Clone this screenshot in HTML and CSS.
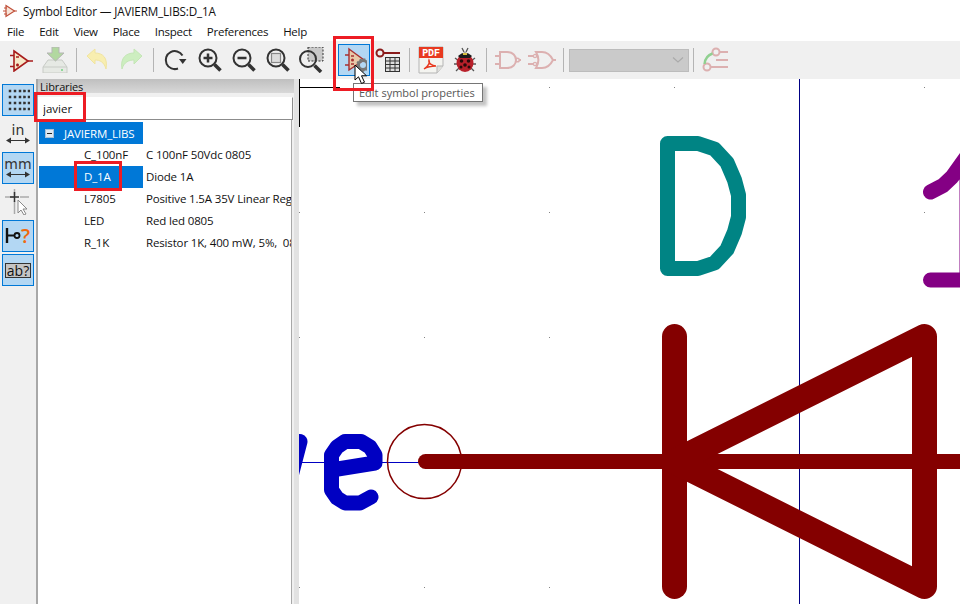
FILE: index.html
```html
<!DOCTYPE html>
<html lang="en">
<head>
    <meta charset="UTF-8">
    <title>Symbol Editor — JAVIERM_LIBS:D_1A</title>
    <link rel="stylesheet" href="styles.css">
</head>
<body>
    <div class="titlebar">
        <svg class="title-icon" width="14" height="14" viewBox="0 0 14 14"><path d="M3 1.5 L11.5 7 L3 12.5 Z" fill="#f8e4d8" stroke="#c0503a" stroke-width="1.2"/><path d="M0 7 H3 M11 7 H14 M4 4 H1 M4 10 H1" stroke="#c0503a" stroke-width="1"/></svg>
        <span>Symbol Editor — JAVIERM_LIBS:D_1A</span>
    </div>
    <div class="menubar">
        <span>File</span><span>Edit</span><span>View</span><span>Place</span><span>Inspect</span><span>Preferences</span><span>Help</span>
    </div>
    <div class="toolbar">
        <div class="btn"><svg width="24" height="24" viewBox="0 0 24 24"><path d="M5 3 L19 13 L5 23 Z" fill="#f6e8c8" stroke="#a81c1c" stroke-width="1.6"/><path d="M1 7.5 H5 M1 18.5 H5 M19 13 H24 M7 9 H10 M7 17 H10 M8.5 15.5 V18.5" stroke="#a81c1c" stroke-width="1.6"/></svg></div>
        <div class="btn"><svg width="26" height="26" viewBox="0 0 26 26"><path d="M1 26 V20 L6 13 H20 L25 20 V26 Z" fill="#e6e9e4" stroke="#c8cbc6"/><path d="M1 20 H25" stroke="#c8cbc6"/><rect x="19" y="22" width="2" height="2" fill="#8fd89a"/><path d="M10 0 H17 V6 H22 L13.500 14 L5 6 H10 Z" fill="#b2d8a0" stroke="#b5b5b5"/></svg></div>
        <div class="sep"></div>
        <div class="btn"><svg width="22" height="24" viewBox="0 0 22 24"><path d="M1 8 L9 1 V5 C17 5 22 10 20 21 C18 14 14 12 9 12 V16 Z" fill="#f8eeb0" stroke="#f0e4a0"/></svg></div>
        <div class="btn"><svg width="24" height="24" viewBox="0 0 24 24"><path d="M23 8 L15 1 V5 C7 5 1 10 3 21 C5 14 10 12 15 12 V16 Z" fill="#cdeec0" stroke="#c4e6b6"/></svg></div>
        <div class="sep sep-wide"></div>
        <div class="btn"><svg width="24" height="24" viewBox="0 0 24 24"><path d="M18.500 7.500 A9 9 0 1 0 14 20.500" fill="none" stroke="#333" stroke-width="2"/><path d="M15 11 H22.500 L18.750 16 Z" fill="#333"/></svg></div>
        <div class="btn">
            <svg width="24" height="24" viewBox="0 0 24 24"><circle cx="10" cy="10" r="8.500" fill="none" stroke="#333" stroke-width="2"/><path d="M16.500 16.500 L22.500 22.500" stroke="#333" stroke-width="3.500"/><path d="M5.500 10 H14.500 M10 5.500 V14.500" stroke="#333" stroke-width="2.500"/></svg>
        </div>
        <div class="btn">
            <svg width="24" height="24" viewBox="0 0 24 24"><circle cx="10" cy="10" r="8.500" fill="none" stroke="#333" stroke-width="2"/><path d="M16.500 16.500 L22.500 22.500" stroke="#333" stroke-width="3.500"/><path d="M5.500 10 H14.500" stroke="#333" stroke-width="2.500"/></svg>
        </div>
        <div class="btn">
            <svg width="24" height="24" viewBox="0 0 24 24"><circle cx="10" cy="10" r="8.500" fill="none" stroke="#333" stroke-width="2"/><path d="M16.500 16.500 L22.500 22.500" stroke="#333" stroke-width="3.500"/><rect x="5.500" y="5.500" width="9" height="9" fill="#ddd" stroke="#888" stroke-width="1.200"/></svg>
        </div>
        <div class="btn">
            <svg width="26" height="26" viewBox="0 0 26 26"><rect x="9" y="0" width="15" height="14" fill="#c8c8c8" stroke="#333" stroke-dasharray="2 1.500"/><circle cx="9" cy="12" r="8" fill="none" stroke="#333" stroke-width="2"/><path d="M15.500 18.500 L22 25" stroke="#333" stroke-width="3.500"/></svg>
        </div>
        <div class="sep"></div>
        <div class="btn active"><svg width="26" height="26" viewBox="0 0 26 26"><path d="M8 2 L23 13 L8 23 Z" fill="#e8c8a8" stroke="#a83030" stroke-width="1.400"/><path d="M4 8 H8 M4 18 H8 M10 9 H13 M10 17 H13" stroke="#a83030" stroke-width="1.400"/><circle cx="11.500" cy="13" r="1.500" fill="#a83030"/><circle cx="22" cy="18" r="4.500" fill="none" stroke="#777" stroke-width="3"/><circle cx="22" cy="18" r="6" fill="none" stroke="#777" stroke-width="1.500" stroke-dasharray="2 2"/></svg></div>
        <div class="btn"><svg width="26" height="26" viewBox="0 0 26 26"><circle cx="5" cy="6" r="3.500" fill="none" stroke="#8a1c1c" stroke-width="2"/><path d="M8.500 6 H25" stroke="#8a1c1c" stroke-width="2"/><rect x="10.500" y="10.500" width="14" height="14" fill="#ddd" stroke="#333"/><path d="M10.500 14 H24.500 M10.500 17.500 H24.500 M10.500 21 H24.500 M15 10.500 V24.500 M20 10.500 V24.500" stroke="#333"/></svg></div>
        <div class="sep sep-mid"></div>
        <div class="btn"><svg width="26" height="28" viewBox="0 0 26 28"><path d="M1 1 H25 V20 L19 27 H1 Z" fill="#f4f4f0" stroke="#b5b5b5"/><path d="M19 27 V20 H25" fill="#e0e0dc" stroke="#b5b5b5"/><rect x="1" y="1" width="24" height="11" fill="#e8391f"/><text x="13" y="10" class="pdf-label">PDF</text><path d="M6 23 C11 20 12 16 11 14 C10 17 14 20 18 20 C14 20 9 21 6 23 Z" fill="none" stroke="#e8391f" stroke-width="1.400"/></svg></div>
        <div class="btn"><svg width="24" height="26" viewBox="0 0 24 26"><path d="M2 11 L6 14 M1 17 H5 M3 24 L7 20 M22 11 L18 14 M23 17 H19 M21 24 L17 20 M9 1 L11 5 M15 1 L13 5" stroke="#555" stroke-width="1.300"/><ellipse cx="12" cy="16" rx="8.500" ry="9" fill="#b8202a"/><path d="M5 9 Q12 2 19 9 L17 11 H7 Z" fill="#1c1c1c"/><rect x="10" y="6" width="4" height="2" fill="#d8c040"/><circle cx="8.500" cy="14" r="1.800" fill="#2a0a0a"/><circle cx="15.500" cy="14" r="1.800" fill="#2a0a0a"/><circle cx="12" cy="18" r="1.800" fill="#2a0a0a"/><circle cx="8" cy="20" r="1.500" fill="#2a0a0a"/><circle cx="16" cy="20" r="1.500" fill="#2a0a0a"/></svg></div>
        <div class="sep sep-mid"></div>
        <div class="btn"><svg width="26" height="20" viewBox="0 0 26 20"><path d="M5 2 H12 C18 2 21 6 21 10 C21 14 18 18 12 18 H5 Z" fill="none" stroke="#dcb0b0" stroke-width="2"/><circle cx="22.500" cy="10" r="1.800" fill="none" stroke="#dcb0b0" stroke-width="1.500"/><path d="M0 6 H5 M0 14 H5 M24 10 H26" stroke="#dcb0b0" stroke-width="2"/></svg></div>
        <div class="btn"><svg width="28" height="20" viewBox="0 0 28 20"><path d="M8 2 H14 C19 2 23 6 25 10 C23 14 19 18 14 18 H8 C11 13 11 7 8 2 Z" fill="none" stroke="#dcb0b0" stroke-width="2"/><circle cx="7" cy="6" r="1.600" fill="none" stroke="#dcb0b0" stroke-width="1.300"/><circle cx="7" cy="14" r="1.600" fill="none" stroke="#dcb0b0" stroke-width="1.300"/><path d="M0 6 H5 M0 14 H5 M25 10 H28" stroke="#dcb0b0" stroke-width="2"/></svg></div>
        <div class="sep"></div>
        <div class="combo"><svg width="12" height="6" viewBox="0 0 12 6"><path d="M1 0.500 L6 5 L11 0.500" fill="none" stroke="#aaa" stroke-width="1.200"/></svg></div>
        <div class="sep sep-mid"></div>
        <div class="btn"><svg width="26" height="26" viewBox="0 0 26 26"><circle cx="14" cy="5" r="3.500" fill="none" stroke="#dcb0b0" stroke-width="2"/><circle cx="5" cy="20" r="3.500" fill="none" stroke="#dcb0b0" stroke-width="2"/><path d="M17.500 5 H26 M8.500 20 H26 M14 13 H26" stroke="#dcb0b0" stroke-width="2"/><path d="M2.500 17 C3 12 6 8 10.500 6.500" fill="none" stroke="#90d090" stroke-width="2.400"/></svg></div>
    </div>
    <div class="main">
        <div class="vtools">
            <div class="vbtn active"><svg width="24" height="24" viewBox="0 0 24 24"><g fill="#333" stroke="#333" stroke-width="0.500"><rect x="3" y="2" width="2" height="2"/><rect x="8" y="2" width="2" height="2"/><rect x="13" y="2" width="2" height="2"/><rect x="17.500" y="2" width="2" height="2"/><rect x="22" y="2" width="2" height="2"/><rect x="3" y="8" width="2" height="2"/><rect x="8" y="8" width="2" height="2"/><rect x="13" y="8" width="2" height="2"/><rect x="17.500" y="8" width="2" height="2"/><rect x="22" y="8" width="2" height="2"/><rect x="3" y="14" width="2" height="2"/><rect x="8" y="14" width="2" height="2"/><rect x="13" y="14" width="2" height="2"/><rect x="17.500" y="14" width="2" height="2"/><rect x="22" y="14" width="2" height="2"/><rect x="3" y="20" width="2" height="2"/><rect x="8" y="20" width="2" height="2"/><rect x="13" y="20" width="2" height="2"/><rect x="17.500" y="20" width="2" height="2"/><rect x="22" y="20" width="2" height="2"/></g></svg></div>
            <div class="vbtn unit">
                <span>in</span>
                <svg width="24" height="7" viewBox="0 0 24 7"><path d="M0 3.500 L5 0.500 V6.500 Z M24 3.500 L19 0.500 V6.500 Z" fill="#333"/><path d="M3 3.500 H21" stroke="#333"/></svg>
            </div>
            <div class="vbtn unit active">
                <span>mm</span>
                <svg width="24" height="7" viewBox="0 0 24 7"><path d="M0 3.500 L5 0.500 V6.500 Z M24 3.500 L19 0.500 V6.500 Z" fill="#333"/><path d="M3 3.500 H21" stroke="#333"/></svg>
            </div>
            <div class="vbtn"><svg width="26" height="26" viewBox="0 0 26 26"><path d="M0 8 H9 M15 8 H24 M9.500 0 V6 M9.500 12 V25" stroke="#aaa" stroke-width="1.500"/><path d="M5 8 H14 M9.500 3 V13" stroke="#333" stroke-width="1.500"/><path d="M13 11 V24 L16 21 L19 26 L21 25 L18 20 L22 20 Z" fill="#fff" stroke="#888"/></svg></div>
            <div class="vbtn active"><svg width="30" height="24" viewBox="0 0 30 24"><path d="M4 4 V19" stroke="#111" stroke-width="2.400"/><path d="M4 11.500 H11.500" stroke="#111" stroke-width="2"/><circle cx="14" cy="11.500" r="2.500" fill="none" stroke="#111" stroke-width="1.800"/><text x="18" y="19" class="pin-label">?</text></svg></div>
            <div class="vbtn active"><span class="ab-label">ab?</span></div>
        </div>
        <div class="libs">
            <div class="libs-head">Libraries</div>
            <input class="search" type="text" value="javier">
            <div class="tree">
                <div class="row lib">
                    <div class="name"><span class="expander"></span>JAVIERM_LIBS</div>
                </div>
                <div class="row"><div class="name">C_100nF</div><div class="desc">C 100nF 50Vdc 0805</div></div>
                <div class="row selected"><div class="name">D_1A</div><div class="desc">Diode 1A</div></div>
                <div class="row"><div class="name">L7805</div><div class="desc">Positive 1.5A 35V Linear Regulator</div></div>
                <div class="row"><div class="name">LED</div><div class="desc">Red led 0805</div></div>
                <div class="row"><div class="name">R_1K</div><div class="desc">Resistor 1K, 400 mW, 5%,  0805</div></div>
            </div>
        </div>
        <div class="sash"></div>
        <svg class="canvas" width="661" height="525" viewBox="299 79 661 525">
            <g fill="#848484">
                <rect x="299" y="87" width="1" height="1"/><rect x="424" y="87" width="1" height="1"/><rect x="549" y="87" width="1" height="1"/><rect x="674" y="87" width="1" height="1"/><rect x="924" y="87" width="1" height="1"/>
                <rect x="299" y="212" width="1" height="1"/><rect x="424" y="212" width="1" height="1"/><rect x="549" y="212" width="1" height="1"/><rect x="924" y="212" width="1" height="1"/>
                <rect x="299" y="337" width="1" height="1"/><rect x="424" y="337" width="1" height="1"/><rect x="549" y="337" width="1" height="1"/>
                <rect x="549" y="462" width="1" height="1"/>
                <rect x="299" y="587" width="1" height="1"/><rect x="424" y="587" width="1" height="1"/><rect x="549" y="587" width="1" height="1"/>
            </g>
            <path d="M299.500 79 V127 M299 87.500 H340" stroke="#000" fill="none"/>
            <path d="M799.500 79 V604" stroke="#000084" fill="none"/>
            <path d="M299 462.500 H420" stroke="#0000c2" fill="none"/>
            <!-- reference text -->
            <path d="M667.500 268.500 V143.500 H698 L714.500 149 L727 162.500 L734.500 180 L738.500 195 V217 L734.500 232 L727 249.500 L714.500 263 L698 268.500 Z" fill="none" stroke="#008484" stroke-width="15" stroke-linejoin="round"/>
            <!-- value text -->
            <path d="M930.500 192 L943 185.500 L952 177 L967 156 V280 M930.500 280 H967" fill="none" stroke="#840084" stroke-width="15" stroke-linecap="round" stroke-linejoin="round"/>
            <path d="M290 480 L300 441.500" fill="none" stroke="#0000c2" stroke-width="15" stroke-linecap="round"/>
            <path d="M331.500 470 L375 463 V455 L370 447 L361 441.500 H345 L337 447 L331.500 455 V490 L337 498 L345 503 H360 L371 497" fill="none" stroke="#0000c2" stroke-width="15" stroke-linecap="round" stroke-linejoin="round"/>
            <!-- diode -->
            <circle cx="424.500" cy="461.500" r="37" fill="none" stroke="#840000" stroke-width="1.500"/>
            <path d="M425.500 461.500 H960" stroke="#840000" stroke-width="15" stroke-linecap="round"/>
            <path d="M674.500 336.500 V586.500" stroke="#840000" stroke-width="25" stroke-linecap="round"/>
            <path d="M924.500 336.500 V586.500 L674.500 461.500 Z" fill="none" stroke="#840000" stroke-width="25" stroke-linejoin="round"/>
        </svg>
    </div>

    <div class="tooltip">Edit symbol properties</div>
    <svg class="pointer" width="15" height="21" viewBox="0 0 15 21"><path d="M1 1 V16 L4.500 12.800 L7.500 19.500 L10.500 18.200 L7.500 11.800 L12.500 11.800 Z" fill="#fff" stroke="#000"/></svg>
    <div class="mark mark-search"></div>
    <div class="mark mark-item"></div>
    <div class="mark mark-tool"></div>
</body>
</html>
```

FILE: styles.css
```css
body {
    font-family: "Open Sans", "Noto Sans", sans-serif;
    font-size: 11.5px;
    letter-spacing: -0.15px;
    color: #111;
    margin: 0;
    width: 960px;
    height: 604px;
    overflow: hidden;
    position: relative;
    background: #fff;
}
svg {
    display: block;
}
.titlebar {
    height: 22px;
    display: flex;
    align-items: center;
    gap: 6px;
    padding-left: 3px;
    font-size: 11.7px;
}
.menubar {
    height: 19px;
    display: flex;
    align-items: center;
    gap: 15px;
    padding-left: 7px;
    letter-spacing: -0.25px;
}
.toolbar {
    height: 38px;
    display: flex;
    align-items: center;
    padding-left: 4px;
    box-sizing: border-box;
    background: #f0f0f0;
}
.btn {
    width: 34px;
    height: 32px;
    flex: none;
    display: flex;
    align-items: center;
    justify-content: center;
    box-sizing: border-box;
}
.btn.active {
    width: 32px;
    margin: 0 1px;
    background: #b3d7f3;
    border: 1px solid #0078d7;
}
.sep {
    width: 8px;
    height: 24px;
    flex: none;
    position: relative;
}
.sep::after {
    content: "";
    display: block;
    width: 1px;
    height: 100%;
    margin: 0 auto;
    background: #b4b4b4;
}
.sep-wide {
    width: 11px;
}
.sep-mid {
    width: 9px;
}
.combo {
    width: 120px;
    height: 23px;
    margin-left: 2px;
    flex: none;
    display: flex;
    align-items: center;
    justify-content: flex-end;
    padding-right: 4px;
    box-sizing: border-box;
    background: #cacaca;
    border: 1px solid #bcbcbc;
}
.main {
    display: flex;
    height: 525px;
}
.vtools {
    width: 36px;
    flex: none;
    display: flex;
    flex-direction: column;
    gap: 2px;
    padding: 5px 0 0 2px;
    box-sizing: border-box;
    background: #f0f0f0;
}
.vbtn {
    width: 32px;
    height: 32px;
    display: flex;
    flex-direction: column;
    align-items: center;
    justify-content: center;
    box-sizing: border-box;
}
.vbtn.active {
    background: #b3d7f3;
    border: 1px solid #0078d7;
}
.unit {
    font-family: "DejaVu Sans", sans-serif;
    font-size: 14px;
    line-height: 13px;
    letter-spacing: 0;
    color: #333;
}
.ab-label {
    font-size: 14px;
    line-height: 13px;
    letter-spacing: 0;
    padding: 0 1px;
    color: #111;
    background: #c4c4c4;
    border: 1px solid #333;
}
.pin-label {
    font-family: "Open Sans", sans-serif;
    font-size: 20px;
    font-weight: 600;
    fill: #f06a10;
}
.pdf-label {
    font-family: "Liberation Mono", monospace;
    font-size: 10px;
    font-weight: 700;
    fill: #fff;
    text-anchor: middle;
}
.libs {
    width: 258px;
    flex: none;
    display: flex;
    flex-direction: column;
    box-sizing: border-box;
    border-left: 2px solid #a8a8a8;
    background: #f0f0f0;
}
.libs-head {
    height: 14px;
    line-height: 15px;
    padding-left: 2px;
    font-size: 11px;
    background: linear-gradient(#bfbfbf, #d8d8d8);
}
.search {
    height: 23px;
    margin: 4px 1px 0 0;
    padding: 0 4px;
    box-sizing: border-box;
    font: inherit;
    color: #111;
    background: #fff;
    border: 1px solid #fff;
    border-right-color: #8c8c8c;
    border-bottom-color: #8c8c8c;
    outline: none;
}
.tree {
    flex: 1;
    margin-right: 2px;
    padding: 2px 0 0 1px;
    background: #fff;
    border-right: 1px solid #a8a8a8;
    overflow: hidden;
}
.row {
    height: 22px;
    display: grid;
    grid-template-columns: 104px 1fr;
    white-space: pre;
    line-height: 21px;
}
.name {
    padding-left: 45px;
    height: 22px;
}
.desc {
    padding-left: 3px;
    overflow: hidden;
}
.row.selected .name {
    color: #fff;
    background: #0078d7;
}
.lib .name {
    display: flex;
    align-items: center;
    padding-left: 6px;
    color: #fff;
    background: #0078d7;
}
.expander {
    width: 9px;
    height: 9px;
    margin-right: 10px;
    position: relative;
    box-sizing: border-box;
    background: #dfe9f2;
    border: 1px solid #a8c0d8;
}
.expander::after {
    content: "";
    position: absolute;
    left: 1px;
    top: 3px;
    width: 5px;
    height: 1px;
    background: #222;
}
.sash {
    width: 5px;
    flex: none;
    background: #e2e2e2;
}
.canvas {
    flex: none;
}
.tooltip {
    position: absolute;
    left: 353px;
    top: 83px;
    width: 130px;
    height: 19px;
    box-sizing: border-box;
    padding-left: 5px;
    line-height: 17px;
    font-size: 11px;
    letter-spacing: 0;
    color: #575757;
    background: #fff;
    border: 1px solid #767676;
    box-shadow: 4px 4px 3px #c4c4c4;
    white-space: nowrap;
}
.pointer {
    position: absolute;
    left: 354px;
    top: 64px;
}
.mark {
    position: absolute;
    box-sizing: border-box;
    border: 3px solid #ed1c24;
}
.mark-search {
    left: 34px;
    top: 92px;
    width: 52px;
    height: 30px;
}
.mark-item {
    left: 74px;
    top: 161px;
    width: 48px;
    height: 30px;
}
.mark-tool {
    left: 333px;
    top: 36px;
    width: 41px;
    height: 55px;
}
```
